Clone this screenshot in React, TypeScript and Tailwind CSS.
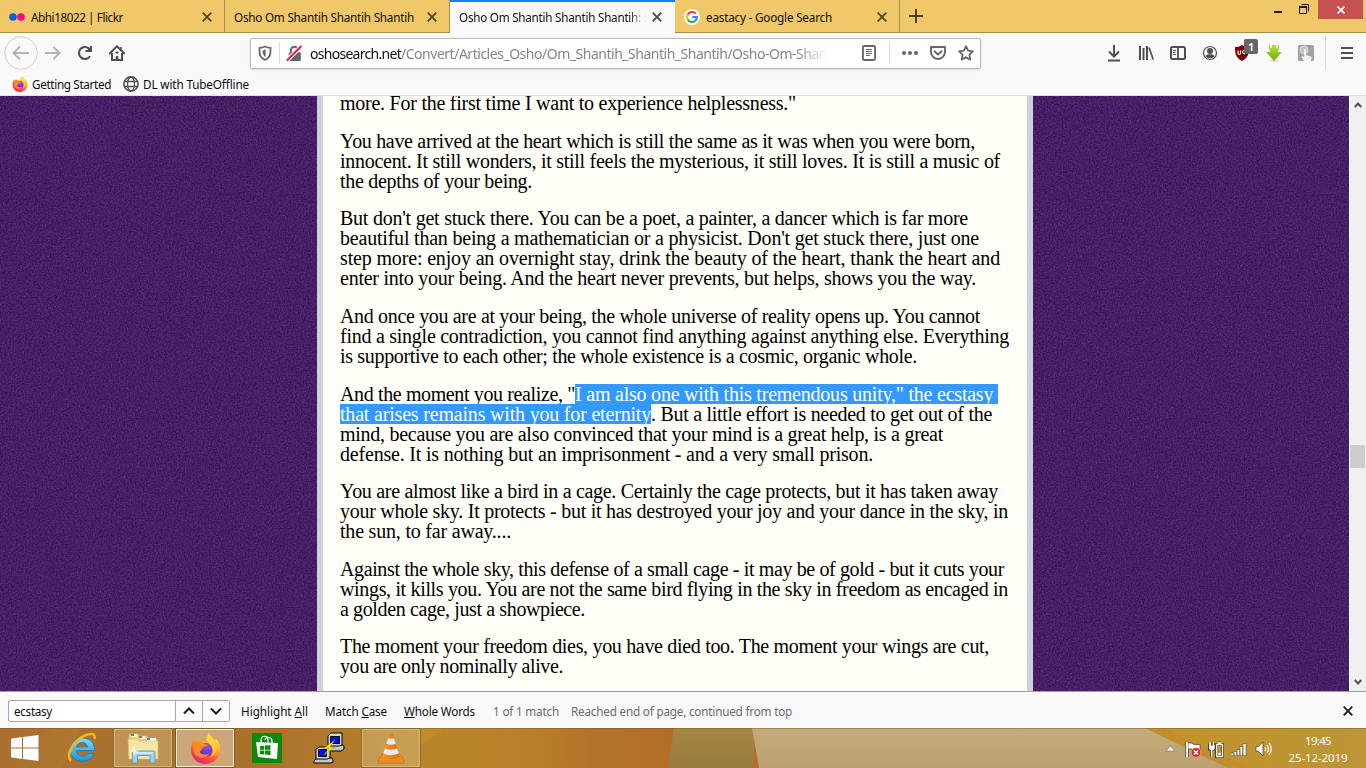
import React, { useLayoutEffect, useRef } from 'react';

const UI = "font-['Noto_Sans','Open_Sans',sans-serif]";

// Tracks a run of text so that it fills the given width.
function Fit({ w, children, className = '' }: { w: number; children: React.ReactNode; className?: string }) {
  const ref = useRef<HTMLSpanElement>(null);
  useLayoutEffect(() => {
    const el = ref.current;
    if (!el) return;
    el.style.letterSpacing = '0px';
    const n = (el.textContent || '').length;
    el.style.letterSpacing = `${(w - el.getBoundingClientRect().width) / n}px`;
  }, [w]);
  return (
    <span ref={ref} className={`inline-block shrink-0 whitespace-pre ${className}`}>
      {children}
    </span>
  );
}

function Cross({ size = 10, color = '#4a4022', sw = 1.7 }: { size?: number; color?: string; sw?: number }) {
  return (
    <svg width={size} height={size} viewBox="0 0 10 10" fill="none" stroke={color} strokeWidth={sw} className="shrink-0">
      <path d="M.7.7 9.3 9.3M9.3.7.7 9.3" />
    </svg>
  );
}

function GoogleLogo() {
  return (
    <svg width="16" height="16" viewBox="0 0 16 16">
      <circle cx="8" cy="8" r="8" fill="#fff" />
      <g fill="none" strokeWidth="2.1">
        <path d="M11.7 4.6A5 5 0 0 0 3.6 5.7" stroke="#ea4335" />
        <path d="M3.6 5.7a5 5 0 0 0 0 4.7" stroke="#fbbc05" />
        <path d="M3.6 10.4a5 5 0 0 0 7.6 1.5" stroke="#34a853" />
        <path d="M11.2 11.9A4.8 4.8 0 0 0 13 8.1H8.2" stroke="#4285f4" />
      </g>
    </svg>
  );
}

function Firefox({ size, id }: { size: number; id: string }) {
  return (
    <svg width={size} height={size} viewBox="0 0 32 32">
      <defs>
        <linearGradient id={id + 'a'} x1=".8" y1="0" x2=".25" y2="1">
          <stop offset="0" stopColor="#fff44f" />
          <stop offset=".35" stopColor="#ffb32a" />
          <stop offset=".65" stopColor="#ff5b36" />
          <stop offset="1" stopColor="#e31587" />
        </linearGradient>
        <radialGradient id={id + 'b'} cx=".6" cy=".25" r=".8">
          <stop offset="0" stopColor="#a44ce8" />
          <stop offset="1" stopColor="#4834b8" />
        </radialGradient>
      </defs>
      <path d="M20 0c1 4 4 5 6 8l1-2c2 2 4 6 4 11 0 9-7 15-15 15S1 26 1 17c0-5 2-9 4-11l1 3 3-3 1 3c3-1 5-1 7 0-1-4 1-7 3-9z" fill={`url(#${id}a)`} />
      <circle cx="16.5" cy="17.2" r="7" fill={`url(#${id}b)`} />
      <path d="M3 12c4-4 8-4 11-1l4 1c-1 2-3 2-5 3 0 2-2 3-3 4 1 4 7 4 10 2-2 5-10 6-14 2-2-2-3-6-3-11z" fill="#ff8a20" />
      <path d="M20 0c1 5 6 7 7 13 1 5-1 10-5 12 2-4 2-9-1-12-4-4-4-9-1-13z" fill="#ffdb35" opacity=".65" />
    </svg>
  );
}

function Tab({ title, w, icon, active, fade }: { title: string; w: number; icon?: React.ReactNode; active?: boolean; fade?: boolean }) {
  return (
    <div
      className={`flex h-[33px] w-[225px] shrink-0 items-center pl-[9px] ${
        active ? 'border-t-2 border-[#0a84ff] bg-[#f9f9fa] pr-[13px] pb-px' : 'border-r border-b border-[#a98d49] bg-[#f0c869] pt-[2px] pr-[12px]'
      }`}
    >
      {icon && <span className="mr-[6px] flex w-4 shrink-0 justify-center">{icon}</span>}
      <div className={`h-[18px] min-w-0 flex-1 overflow-hidden text-[11.7px] leading-[18px] text-[#0c0c0d] ${fade ? '[mask-image:linear-gradient(90deg,#000_88%,transparent_97%)]' : ''}`}>
        <Fit w={w}>{title}</Fit>
      </div>
      <Cross color={active ? '#4a4a4e' : '#4a4022'} />
    </div>
  );
}

function Cell({ children }: { children: React.ReactNode }) {
  return <div className="relative flex h-8 w-8 shrink-0 items-center justify-center">{children}</div>;
}

type LineData = [string, number];
const PARAS: { gap: string; lines: LineData[] }[] = [
  { gap: 'mt-0', lines: [['more. For the first time I want to experience helplessness."', 456]] },
  {
    gap: 'mt-[18px]',
    lines: [
      ['You have arrived at the heart which is still the same as it was when you were born,', 635],
      ['innocent. It still wonders, it still feels the mysterious, it still loves. It is still a music of', 660],
      ['the depths of your being.', 192],
    ],
  },
  {
    gap: 'mt-[17px]',
    lines: [
      ["But don't get stuck there. You can be a poet, a painter, a dancer which is far more", 628],
      ["beautiful than being a mathematician or a physicist. Don't get stuck there, just one", 639],
      ['step more: enjoy an overnight stay, drink the beauty of the heart, thank the heart and', 660],
      ['enter into your being. And the heart never prevents, but helps, shows you the way.', 636],
    ],
  },
  {
    gap: 'mt-[18px]',
    lines: [
      ['And once you are at your being, the whole universe of reality opens up. You cannot', 640],
      ['find a single contradiction, you cannot find anything against anything else. Everything', 669],
      ['is supportive to each other; the whole existence is a cosmic, organic whole.', 577],
    ],
  },
  {
    gap: 'mt-[18px]',
    lines: [
      ['And the moment you realize, "|I am also one with this tremendous unity," the ecstasy ', 658],
      ['|that arises remains with you for eternity|. But a little effort is needed to get out of the', 652],
      ['mind, because you are also convinced that your mind is a great help, is a great', 603],
      ['defense. It is nothing but an imprisonment - and a very small prison.', 533],
    ],
  },
  {
    gap: 'mt-[17px]',
    lines: [
      ['You are almost like a bird in a cage. Certainly the cage protects, but it has taken away', 658],
      ['your whole sky. It protects - but it has destroyed your joy and your dance in the sky, in', 668],
      ['the sun, to far away....', 171],
    ],
  },
  {
    gap: 'mt-[18px]',
    lines: [
      ['Against the whole sky, this defense of a small cage - it may be of gold - but it cuts your', 664],
      ['wings, it kills you. You are not the same bird flying in the sky in freedom as encaged in', 668],
      ['a golden cage, just a showpiece.', 245],
    ],
  },
  {
    gap: 'mt-[17px]',
    lines: [
      ['The moment your freedom dies, you have died too. The moment your wings are cut,', 649],
      ['you are only nominally alive.', 223],
    ],
  },
];

const SPLIT_WIDTHS: Record<string, number[]> = { A: [235, 423], t: [0, 311, 341] };

function Line({ text, w }: { text: string; w: number }) {
  if (!text.includes('|')) {
    return (
      <div className="h-5">
        <Fit w={w}>{text}</Fit>
      </div>
    );
  }
  const parts = text.split('|');
  const widths = parts[0] === '' ? SPLIT_WIDTHS.t : SPLIT_WIDTHS.A;
  return (
    <div className="flex h-5">
      {parts.map((p, i) =>
        p === '' ? null : (
          <Fit key={i} w={widths[i]} className={i === 1 ? 'h-5 bg-[#3399ff] text-white' : ''}>
            {p}
          </Fit>
        ),
      )}
    </div>
  );
}

function Purple({ id, className }: { id: string; className: string }) {
  return (
    <div className={`overflow-hidden bg-[#471e65] ${className}`}>
      <svg width="100%" height="100%" className="block">
        <filter id={id} x="0" y="0" width="100%" height="100%" colorInterpolationFilters="sRGB">
          <feTurbulence type="fractalNoise" baseFrequency="0.62" numOctaves="3" seed="4" />
          <feColorMatrix values="0.22 0.06 0 0 0.14  0.24 0 0 0 0  0.06 0.18 0 0 0.28  0 0 0 0 1" />
        </filter>
        <rect width="100%" height="100%" filter={`url(#${id})`} />
      </svg>
    </div>
  );
}

function Toolbar() {
  return (
    <div className="flex h-[40px] items-center bg-[#f9f9fa] pl-1">
      <div className="flex h-[34px] w-[33px] shrink-0 items-center justify-center">
        <svg width="34" height="34" viewBox="0 0 34 34" fill="none" className="shrink-0">
          <circle cx="17" cy="17" r="16.3" stroke="#cfcfd0" />
          <path d="M25 17H10M16 10.5 9.5 17l6.5 6.5" stroke="#b4b4b6" strokeWidth="2" />
        </svg>
      </div>
      <Cell>
        <svg width="16" height="16" viewBox="0 0 16 16" fill="none" stroke="#b4b4b6" strokeWidth="2">
          <path d="M0 8h14M8.5 2l6 6-6 6" />
        </svg>
      </Cell>
      <Cell>
        <svg width="16" height="16" viewBox="0 0 16 16" fill="none" stroke="#4f4f52" strokeWidth="2.1">
          <path d="M13 11.2A6 6 0 1 1 12.5 4" />
          <path d="M15 .5V7H8.5z" fill="#4f4f52" stroke="none" />
          <path d="M8.5 6H14V1" strokeWidth="1.8" />
        </svg>
      </Cell>
      <Cell>
        <svg width="16" height="16" viewBox="0 0 16 16" fill="none" stroke="#4f4f52" strokeWidth="2">
          <path d="M.7 8.5 8 1.3l7.3 7.2" strokeLinecap="round" />
          <path d="M3 8v7h10V8" />
          <path d="M12 2v3" strokeWidth="1.6" />
          <path d="M8 15v-4" strokeWidth="2.5" />
          <path d="M6.5 7.5h3" strokeWidth="2" />
        </svg>
      </Cell>
      <div className="ml-[117px] flex h-[31px] w-[731px] shrink-0 items-center rounded-[2px] border border-[#b9b9ba] bg-white pl-[6px] shadow-sm">
        <svg width="16" height="16" viewBox="0 0 16 16" fill="none" stroke="#66666a" strokeWidth="1.8" strokeLinejoin="round" className="shrink-0">
          <path d="M8 1.5c2 1 3.5 1.3 5.5 1.4v3.5c0 4-2 7-5.5 8.4-3.500-1.400-5.500-4.400-5.500-8.400V2.900C4.500 2.800 6 2.500 8 1.500z" />
          <path d="M8 5v6.500C6.300 10.300 5.500 8.500 5.500 5.500z" fill="#66666a" stroke="none" />
          <path d="M8 4.500v7" strokeWidth="1.300" />
        </svg>
        <span className="mx-[6px] h-[22px] w-px shrink-0 bg-[#dcdcdd]" />
        <svg width="17" height="17" viewBox="0 0 16 16" fill="none" className="shrink-0">
          <path d="M4.700 8V5a3.300 3.300 0 0 1 6.600 0v3" stroke="#66666a" strokeWidth="2" />
          <rect x="2.500" y="7" width="11.500" height="8" rx="1" fill="#66666a" />
          <path d="M.8 14.500 14.500 1" stroke="#fff" strokeWidth="4" />
          <path d="M.8 14.500 14.500 1" stroke="#ed1c50" strokeWidth="2" />
        </svg>
        <div className="ml-[7px] flex h-[22px] w-[518px] shrink-0 overflow-hidden pt-px text-[14px] leading-[21px] text-[#858587] [mask-image:linear-gradient(90deg,#000_94%,transparent_100%)]">
          <Fit w={91} className="text-[#0c0c0d]">oshosearch.net</Fit>
          <Fit w={426}>/Convert/Articles_Osho/Om_Shantih_Shantih_Shantih/Osho-Om-Shan</Fit>
        </div>
        <svg width="16" height="16" viewBox="0 0 16 16" fill="none" stroke="#66666a" className="ml-[33px] shrink-0">
          <rect x="1.900" y="1" width="12.200" height="14" rx="1.500" strokeWidth="1.900" />
          <path d="M5 4.500h6M5 6.500h6M5 8.500h6M5 10.500h4" />
        </svg>
        <span className="mr-[12px] ml-[12px] h-[22px] w-px shrink-0 bg-[#dcdcdd]" />
        <svg width="16" height="16" viewBox="0 0 16 16" fill="#66666a" className="shrink-0">
          <circle cx="2" cy="8" r="2" />
          <circle cx="8" cy="8" r="2" />
          <circle cx="14" cy="8" r="2" />
        </svg>
        <svg width="16" height="16" viewBox="0 0 16 16" fill="none" stroke="#66666a" strokeWidth="1.900" strokeLinejoin="round" className="ml-[12px] shrink-0">
          <path d="M1 2h14v5a7 7 0 0 1-14 0z" />
          <path d="m4.500 6.300 3.500 3.300 3.500-3.300" strokeLinecap="round" />
        </svg>
        <svg width="16" height="16" viewBox="0 0 16 16" fill="none" stroke="#66666a" strokeWidth="1.800" strokeLinejoin="round" className="ml-[12px] shrink-0">
          <path d="m8 1.200 2.100 4.500 4.800.6-3.500 3.400.9 4.900L8 12.200l-4.300 2.400.9-4.900L1.100 6.300l4.800-.6z" />
        </svg>
      </div>
      <div className="ml-[117px] flex shrink-0 items-center">
        <Cell>
          <svg width="14" height="17" viewBox="0 0 14 17" fill="none" stroke="#4f4f52" strokeWidth="2">
            <path d="M7 0v11M2 6.500l5 5 5-5M1 15.500h12" />
          </svg>
        </Cell>
        <Cell>
          <svg width="16" height="16" viewBox="0 0 16 16" fill="none" stroke="#4f4f52" strokeWidth="2">
            <path d="M2 1v14M5.500 3v12M9 1v14" />
            <path d="m11 2.500 4.200 12" strokeWidth="1.700" />
          </svg>
        </Cell>
        <Cell>
          <svg width="16" height="16" viewBox="0 0 16 16" fill="none" stroke="#4f4f52">
            <rect x="1" y="2" width="14" height="12" rx="1.500" strokeWidth="2" />
            <path d="M8 2v12" strokeWidth="1.800" />
            <path d="M3 5.500h3M3 7.500h2.500M3 9.500h3" />
          </svg>
        </Cell>
        <Cell>
          <svg width="16" height="16" viewBox="0 0 16 16" fill="#4f4f52">
            <circle cx="8" cy="8" r="6.500" fill="none" stroke="#4f4f52" strokeWidth="1.200" />
            <circle cx="8" cy="6" r="3" />
            <path d="M3.500 11c1-1.300 2.500-1.700 4.500-1.700s3.500.4 4.500 1.700C11.500 12.500 10 13.200 8 13.200S4.500 12.500 3.500 11z" />
          </svg>
        </Cell>
        <Cell>
          <svg width="16" height="16" viewBox="0 0 16 16">
            <path d="M8 0c2 1.500 4 2 7 2 0 7-1 11-7 14C2 13 1 9 1 2c3 0 5-.5 7-2z" fill="#800000" />
            <path d="M4 5.500V8c0 2 2.500 2 2.500 0V5.500M11 5.500C8 4.500 8 9.500 11 8.500" fill="none" stroke="#fff" strokeWidth="1.100" />
          </svg>
          <span className="absolute top-[2px] left-[18px] flex h-[15px] w-[14px] items-center justify-center rounded-[2px] bg-[#666] text-[10px] font-bold text-white">1</span>
        </Cell>
        <Cell>
          <svg width="16" height="17" viewBox="0 0 16 17">
            <defs>
              <linearGradient id="green" x1="0" y1="0" x2="0" y2="1">
                <stop offset="0" stopColor="#b1e23a" />
                <stop offset="1" stopColor="#6fae12" />
              </linearGradient>
            </defs>
            <ellipse cx="8" cy="15.800" rx="5" ry="1" fill="#ddd" />
            <path d="M3 0h1.500v3H6V0h4v3h1.500V0H13v4.500h-1V7h4l-8 9-8-9h4V4.500H3z" fill="url(#green)" />
          </svg>
        </Cell>
        <Cell>
          <svg width="16" height="17" viewBox="0 0 16 17">
            <rect width="16" height="16" rx="1.500" fill="#a2a2a2" />
            <circle cx="6" cy="5" r="4" fill="#c4c4c4" stroke="#d8d8d8" />
            <path d="M6 5c0-1.500 2-1.500 2 0v5l5 1.500c1 .5.500 3-.5 5H6L3.500 12c0-1 1.500-1 2.500 0z" fill="#edf4fa" />
          </svg>
        </Cell>
        <span className="ml-[3px] h-[34px] w-px bg-[#d7d7d8]" />
        <div className="ml-[5px]">
          <Cell>
            <svg width="12" height="12" viewBox="0 0 12 12" stroke="#4f4f52" strokeWidth="2">
              <path d="M0 1h12M0 6h12M0 11h12" />
            </svg>
          </Cell>
        </div>
      </div>
    </div>
  );
}

function TaskButton({ children, state = 'idle', w }: { children: React.ReactNode; state?: string; w: string }) {
  const skin =
    state === 'active'
      ? 'border border-[#f7eedd] bg-[#ecdcc4]/50 outline outline-1 outline-[#7f5c25]'
      : state === 'open'
        ? 'border border-[#d6b684] bg-[#e8cf9f]/35 outline outline-1 outline-[#8d682c]'
        : '';
  return <div className={`flex h-[38px] shrink-0 items-center justify-center ${w} ${skin}`}>{children}</div>;
}

function Taskbar() {
  return (
    <div className="relative h-10 overflow-hidden bg-[#b4802b]">
      <svg width="1366" height="40" viewBox="0 0 1366 40" className="absolute inset-0">
        <defs>
          <linearGradient id="tb" x1="0" x2="674" gradientUnits="userSpaceOnUse">
            <stop offset="0" stopColor="#a97030" />
            <stop offset=".4" stopColor="#ab722d" />
            <stop offset=".63" stopColor="#b8862a" />
            <stop offset=".78" stopColor="#b98029" />
            <stop offset=".88" stopColor="#b3742a" />
            <stop offset="1" stopColor="#b46d28" />
          </linearGradient>
          <linearGradient id="tg" x1="0" x2="0" y1="0" y2="1">
            <stop offset="0" stopColor="#c5ac7a" />
            <stop offset="1" stopColor="#b9a172" />
          </linearGradient>
          <linearGradient id="to" x1="0" x2="0" y1="0" y2="1">
            <stop offset="0" stopColor="#a68642" />
            <stop offset="1" stopColor="#997b3f" />
          </linearGradient>
          <linearGradient id="ty" x1="0" x2="1">
            <stop offset="0" stopColor="#c1932b" />
            <stop offset="1" stopColor="#bd9537" />
          </linearGradient>
          <linearGradient id="tl" x1="0" x2="1">
            <stop offset="0" stopColor="#b87f2c" stopOpacity="0" />
            <stop offset="1" stopColor="#b98432" />
          </linearGradient>
        </defs>
        <rect width="1366" height="40" fill="url(#tb)" />
        <path d="M55 0H80L62 40H0V20z" fill="url(#tl)" opacity=".35" />
        <path d="M421 0h24l-24 18z" fill="#c38f2b" opacity=".7" />
        <path d="M674 0h80v40h-86z" fill="url(#to)" />
        <path d="M752 0h614v40H759z" fill="url(#tg)" />
        <path d="M1145 0h221v40h-138z" fill="#c18d2d" />
        <path d="M1162 0h204v40h-116z" fill="url(#ty)" />
        <path d="M0 .5h1366" stroke="#6e4e1a" strokeOpacity=".4" />
      </svg>
      <div className="relative flex h-10 items-center">
        <div className="flex w-[50px] shrink-0 justify-center">
          <svg width="28" height="26" viewBox="0 0 28 26" fill="#fff">
            <path d="M0 3.700 11 2v10.400H0zM12 1.900 27.500 0v12.400H12zM0 13.500h11V24L0 22.200zM12 13.500h15.500V26L12 24z" />
          </svg>
        </div>
        <TaskButton w="w-[64px]">
          <svg width="30" height="32" viewBox="0 0 30 32" fill="none">
            <defs>
              <linearGradient id="ieg" x1="0" y1="0" x2="0" y2="1">
                <stop offset="0" stopColor="#7ddcff" />
                <stop offset="1" stopColor="#1694d8" />
              </linearGradient>
            </defs>
            <path d="M27.500 18.500H9.500c.5 7 9 7 11.500 3h6.300C22 34 3.500 31 3.500 18 3.500 2 28.500 2 27.500 18.500zM9.500 15h11.300c-.8-6-10.300-6-11.300 0z" fill="url(#ieg)" stroke="#2178ad" strokeWidth=".8" />
            <path d="M4 29C-2 23 7 8 18 3.500 24 1 29 1 27.500 7" stroke="#f2b823" strokeWidth="2.500" />
          </svg>
        </TaskButton>
        <TaskButton w="w-[58px]" state="open">
          <svg width="34" height="32" viewBox="0 0 34 32">
            <path d="M3 2h9l2 2h7l2 3h8v19H3z" fill="#e9d077" stroke="#cbb463" strokeWidth=".8" />
            <path d="M5 2h6v3H5z" fill="#fff" />
            <path d="M5 2h3v2H5z" fill="#24b43a" />
            <path d="M13 4h6v3h-6z" fill="#fff" />
            <path d="M13 4h3v2h-3z" fill="#db4a31" />
            <path d="M21 6h9v3h-9z" fill="#fff" />
            <path d="M21 6h3v2h-3z" fill="#2f8fdf" />
            <path d="M2 7h10l1 2h19v18H3z" fill="#f6e6a1" stroke="#d5c177" strokeWidth=".7" />
            <path d="M6.500 31V20.500q0-1.500 1.500-1.500h19.500q1.500 0 1.500 1.500V31h-5v-7.500H11.500V31z" fill="#9fd0e8" stroke="#5ba1c9" />
            <path d="M8 21h19" stroke="#dff3fc" strokeWidth="1.500" />
            <path d="m8 12 1 6 5 1-5 1-1 5-1-5-5-1 5-1z" fill="#fff" opacity=".85" />
          </svg>
        </TaskButton>
        <div className="w-[4px] shrink-0" />
        <TaskButton w="w-[58px]" state="active">
          <Firefox size={31} id="ffl" />
        </TaskButton>
        <TaskButton w="w-[65px]">
          <svg width="30" height="30" viewBox="0 0 30 30">
            <path d="M0 0h30v30H0z" fill="#0b8a0b" />
            <path d="m4 9 22 1-1 16-19-2z" fill="#fff" />
            <path d="M9 10V7c0-5 7-5 7 0v3M13 7c1-4 7-3 7 1v2" fill="none" stroke="#fff" strokeWidth="1.200" />
            <path d="m8 13 4.300-.3v4H8zM13 12.600l5.500-.4v4.500H13zM8 17.600h4.300v3.800L8 21zM13 17.600h5.500v4.500l-5.500-.6z" fill="#0b8a0b" />
          </svg>
        </TaskButton>
        <TaskButton w="w-[60px]">
          <svg width="32" height="32" viewBox="0 0 32 32" stroke="#000">
            <path d="m14 15 3-2h12l2 1v3l-3 2H14z" fill="#c6c6c6" />
            <path d="m15 4 3-3h11v12l-3 1H15z" fill="#d8d8d8" />
            <path d="M17.500 4.500h9v7h-9z" fill="#0012ed" />
            <path d="m1 29 3-3h15l1 2v2l-2 1H1z" fill="#c6c6c6" />
            <path d="m3 17 3-2h11v11l-3 1H3z" fill="#d8d8d8" />
            <path d="M5.500 17.500h8v7h-8z" fill="#0012ed" />
            <path d="m22 8-11 8h5l-5 7 11-8h-5z" fill="#f9f000" stroke="#8d7f00" strokeWidth=".5" />
          </svg>
        </TaskButton>
        <div className="w-[3px] shrink-0" />
        <TaskButton w="w-[58px]" state="open">
          <svg width="28" height="32" viewBox="0 0 28 32">
            <defs>
              <linearGradient id="vlc" x1="0" x2="1">
                <stop offset="0" stopColor="#f59a31" />
                <stop offset="1" stopColor="#dc6a08" />
              </linearGradient>
            </defs>
            <path d="M5 22h18l4 6v3H1v-3z" fill="#f08a22" stroke="#c86510" strokeWidth=".6" />
            <path d="M12.200 2q1.800-2 3.600 0l6.700 23q-8.500 4.500-17 0z" fill="url(#vlc)" />
            <path d="m11 6.500 6.100.1 1.600 5.200q-5 2-9.400 0zM7.900 16.500q6 2.500 12.200 0l1.600 5q-8 3.500-15.400 0z" fill="#e9ebed" />
          </svg>
        </TaskButton>
        <div className="flex-1" />
        <div className="flex shrink-0 items-center pt-[2px]">
          <svg width="9" height="6" viewBox="0 0 9 6" className="mr-[10px]">
            <path d="M4.500 0 9 5H0z" fill="#f4f4f4" stroke="#6d5d40" strokeWidth=".5" />
          </svg>
          <svg width="18" height="17" viewBox="0 0 18 17">
            <path d="M2 1v15" stroke="#5a4c30" strokeWidth="3.500" />
            <path d="M3 2h4l2 1.500h6V9H9L7 8H3z" fill="#fff" stroke="#5a4c30" strokeWidth=".8" />
            <path d="M2 1v15" stroke="#fff" strokeWidth="1.800" />
            <circle cx="11" cy="11.500" r="4.800" fill="#d82c2c" stroke="#f0b4b0" strokeWidth=".6" />
            <path d="m9 9.500 4 4m0-4-4 4" stroke="#fff" strokeWidth="1.700" />
          </svg>
          <svg width="18" height="17" viewBox="0 0 18 17" className="ml-[5px]" fill="none">
            <path d="M3.500 9v7M2 1v4M5.500 1v4M1 5h6v3H1zM8.500 3.500h6v12h-6zM10 2h3" stroke="#544527" strokeWidth="3" />
            <path d="M3.700 9v7M2 1v4M5.500 1v4" stroke="#fff" strokeWidth="1.500" />
            <path d="M1 4.500h5.700V8L5 9H2.500L1 8z" fill="#fff" />
            <path d="M8.800 3.500h5.700v12H8.800zM10 2h3.200" stroke="#fff" strokeWidth="1.300" />
            <path d="M10 13h3" stroke="#fff" strokeWidth="1.500" />
          </svg>
          <svg width="16" height="13" viewBox="0 0 16 13" className="ml-[5px]" fill="#fff" stroke="#5a481f" strokeWidth=".6">
            <path d="M0 10h2.800v2.700H0zM3 8.500h2.800v4.200H3zM6 6.500h2.800v6.200H6zM9 3.500h2.800v9.200H9zM12 .5h3v12.200h-3z" />
          </svg>
          <svg width="17" height="16" viewBox="0 0 17 16" className="ml-[8px]" fill="none" stroke="#fff">
            <path d="M1 5.500h2.500L8 1v14l-4.500-4.500H1z" fill="#fff" stroke="#5a481f" strokeWidth=".8" />
            <path d="M10 6q1.500 2 0 4M12 4q3 4 0 8M14 2q4.500 6 0 12" strokeWidth="1.200" />
          </svg>
        </div>
        <div className="ml-[16px] w-[60px] shrink-0 pt-px text-center text-[11.5px] leading-[17px] text-white">
          <div><Fit w={26}>19:45</Fit></div>
          <div><Fit w={59}>25-12-2019</Fit></div>
        </div>
        <div className="w-[18px] shrink-0" />
      </div>
    </div>
  );
}

export default function App() {
  return (
    <div className={`flex h-[768px] w-[1366px] flex-col overflow-hidden bg-[#f9f9fa] text-[11.7px] leading-[16px] text-[#0c0c0d] ${UI}`}>
      <div className="flex h-[33px] shrink-0 bg-[#f0c869]">
        <Tab
          title="Abhi18022 | Flickr"
          w={92}
          icon={
            <svg width="16" height="8" viewBox="0 0 16 8">
              <circle cx="4" cy="4" r="3.800" fill="#0063dc" />
              <circle cx="12" cy="4" r="3.800" fill="#ff0084" />
            </svg>
          }
        />
        <Tab title="Osho Om Shantih Shantih Shantih" w={180} />
        <Tab title="Osho Om Shantih Shantih Shantih: E" w={191} active fade />
        <Tab title="eastacy - Google Search" w={126} icon={<GoogleLogo />} />
        <div className="flex flex-1 items-start border-b border-[#a98d49]">
          <svg width="14" height="14" viewBox="0 0 14 14" stroke="#42391f" strokeWidth="1.900" className="mt-[9px] ml-[9px]">
            <path d="M7 0v14M0 7h14" />
          </svg>
          <div className="flex-1" />
          <span className="mt-[11px] h-[2px] w-[8px] bg-[#1d1a12]" />
          <svg width="10" height="10" viewBox="0 0 10 10" fill="none" stroke="#1d1a12" className="mt-[4px] ml-[17px]">
            <path d="M.5 3v6.500h7V3zM2.500.5h7v7" />
            <path d="M0 3h8" strokeWidth="2" />
          </svg>
          <span className="ml-[9px] flex h-[19px] w-[45px] items-center justify-center bg-[#c75050]">
            <Cross size={8} color="#fff" sw={2.1} />
          </span>
          <span className="w-[3px]" />
        </div>
      </div>

      <Toolbar />

      <div className="flex h-[23px] shrink-0 items-center border-b border-[#e0e0e1] pb-[1px] pl-[12px]">
        <Firefox size={16} id="ffs" />
        <Fit w={79} className="ml-[4px]">Getting Started</Fit>
        <svg width="16" height="16" viewBox="0 0 16 16" fill="none" stroke="#4f4f52" strokeWidth="1.300" className="ml-[12px]">
          <circle cx="8" cy="8" r="7.100" strokeWidth="1.600" />
          <ellipse cx="8" cy="8" rx="3.500" ry="7" />
          <path d="M1.500 5.500h13M1.500 10.500h13" />
        </svg>
        <Fit w={106} className="ml-[4px]">DL with TubeOffline</Fit>
      </div>

      <div className="flex h-[595px] shrink-0 overflow-hidden">
        <Purple id="n1" className="w-[317px] shrink-0" />
        <div className="w-[716px] shrink-0 overflow-hidden border-x-[6px] border-[#d0cfe0] bg-[#fffff8] pl-[17px] font-['Liberation_Serif',serif] text-[20px] leading-[20px] text-black">
          <div className="-mt-[3px]">
            {PARAS.map((p, i) => (
              <div key={i} className={p.gap}>
                {p.lines.map(([t, w]) => (
                  <Line key={t} text={t} w={w} />
                ))}
              </div>
            ))}
          </div>
        </div>
        <Purple id="n2" className="w-[316px] shrink-0" />
        <div className="flex w-[17px] flex-col items-center border-r border-l border-white border-r-[#f0f0f0] bg-[#f0f0f0] py-[6px]">
          <svg width="8" height="6" viewBox="0 0 8 6" fill="none" stroke="#505050" strokeWidth="2">
            <path d="m.8 5 3.200-3.500L7.200 5" />
          </svg>
          <span className="mt-[337px] h-[23px] w-[15px] bg-[#cdcdcd]" />
          <div className="flex-1" />
          <svg width="8" height="6" viewBox="0 0 8 6" fill="none" stroke="#505050" strokeWidth="2">
            <path d="m.8 1 3.200 3.500L7.200 1" />
          </svg>
        </div>
      </div>

      <div className="flex h-[37px] shrink-0 items-center border-t border-[#9d9d9e] pt-px pl-[8px]">
        <div className="flex h-[22px] w-[222px] shrink-0 items-stretch rounded-[2px] border border-[#a7a7a8] bg-white">
          <div className="flex w-[166px] items-center pl-[5px]">
            <Fit w={38}>ecstasy</Fit>
          </div>
          <div className="flex w-[27px] items-center justify-center border-l border-[#a7a7a8] bg-[#fbfbfb]">
            <svg width="12" height="8" viewBox="0 0 12 8" fill="none" stroke="#1c1c1e" strokeWidth="2"><path d="m1 6.500 5-5 5 5" /></svg>
          </div>
          <div className="flex w-[27px] items-center justify-center border-l border-[#a7a7a8] bg-[#fbfbfb]">
            <svg width="12" height="8" viewBox="0 0 12 8" fill="none" stroke="#1c1c1e" strokeWidth="2"><path d="m1 1.500 5 5 5-5" /></svg>
          </div>
        </div>
        <Fit w={67} className="ml-[11px]">Highlight <u>A</u>ll</Fit>
        <Fit w={62} className="ml-[17px]">Match <u>C</u>ase</Fit>
        <Fit w={71} className="ml-[17px]"><u>W</u>hole Words</Fit>
        <Fit w={66} className="ml-[18px] text-[#6a6a6c]">1 of 1 match</Fit>
        <Fit w={221} className="ml-[12px] text-[#6a6a6c]">Reached end of page, continued from top</Fit>
        <div className="flex-1" />
        <Cross size={10} color="#1c1c1e" sw={1.8} />
        <span className="w-[13px]" />
      </div>

      <Taskbar />
    </div>
  );
}
